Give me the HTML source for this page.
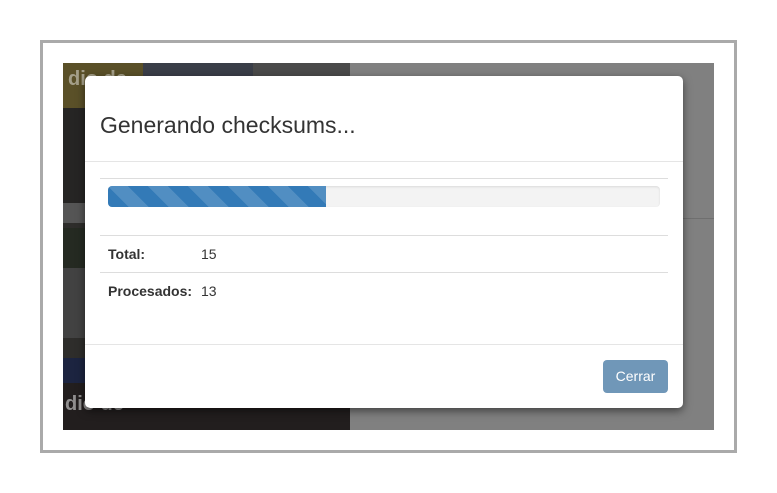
<!DOCTYPE html>
<html><head><meta charset="utf-8"><style>
*{box-sizing:border-box;margin:0;padding:0}
body{width:777px;height:493px;background:#fff;position:relative;overflow:hidden;font-family:"Liberation Sans",sans-serif}
.frame{position:absolute;left:40px;top:40px;width:697px;height:413px;border:3px solid #aaa;background:#fff}
.bgl{position:absolute;left:63px;top:63px;width:287px;height:367px;background:#2e2d2b;overflow:hidden}
.bgr{position:absolute;left:350px;top:63px;width:364px;height:367px;background:#808080}
.bgr:after{content:"";position:absolute;left:0;right:0;top:155px;height:1px;background:#6f6f6f}
.b{position:absolute}
.modal{position:absolute;left:85px;top:76px;width:598px;height:332px;background:#fff;border-radius:5px;box-shadow:0 3px 9px rgba(0,0,0,.5)}
h4{position:absolute;left:15px;top:36px;font-size:23px;font-weight:normal;color:#333}
.hl{position:absolute;left:0;right:0;height:1px;background:#e5e5e5}
.tl{position:absolute;left:15px;right:15px;height:1px;background:#ddd}
.prog{position:absolute;left:23px;top:110px;width:552px;height:21px;background:#f3f3f3;border-radius:4px;box-shadow:inset 0 1px 2px rgba(0,0,0,.1);overflow:hidden}
.bar{width:218px;height:100%;background-color:#337ab7;background-image:linear-gradient(45deg,rgba(255,255,255,.15) 25%,transparent 25%,transparent 50%,rgba(255,255,255,.15) 50%,rgba(255,255,255,.15) 75%,transparent 75%,transparent);background-size:40px 40px}
.lbl{position:absolute;left:23px;font-size:14px;font-weight:bold;color:#333}
.val{position:absolute;left:116px;font-size:14px;color:#333}
.btn{position:absolute;left:518px;top:284px;width:65px;height:33px;background:#7097b8;border-radius:4px;color:#fff;font-size:14px;text-align:center;line-height:33px}
</style></head><body>
<div class="frame"></div>
<div class="bgl">
 <div class="b" style="left:0;top:0;width:80px;height:45px;background:#5a5028"></div>
 <div class="b" style="left:80px;top:0;width:110px;height:50px;background:#3a3e48"></div>
 <div class="b" style="left:190px;top:0;width:97px;height:40px;background:#4a4a4a"></div>
 <div class="b" style="left:0;top:45px;width:287px;height:100px;background:#262524"></div>
 <div class="b" style="left:0;top:140px;width:287px;height:20px;background:#555"></div>
 <div class="b" style="left:0;top:165px;width:287px;height:40px;background:#252a22"></div>
 <div class="b" style="left:0;top:205px;width:287px;height:70px;background:#424242"></div>
 <div class="b" style="left:0;top:295px;width:287px;height:25px;background:#1c2440"></div>
 <div class="b" style="left:0;top:320px;width:287px;height:47px;background:#221e1e"></div>
 <div class="b" style="left:5px;top:5px;color:rgba(255,255,255,.45);font-weight:bold;font-size:20px">dio de</div>
 <div class="b" style="left:2px;top:330px;color:rgba(255,255,255,.5);font-weight:bold;font-size:20px">dio de</div>
</div>
<div class="bgr"></div>
<div class="modal">
 <h4>Generando checksums...</h4>
 <div class="hl" style="top:85px"></div>
 <div class="tl" style="top:102px"></div>
 <div class="prog"><div class="bar"></div></div>
 <div class="tl" style="top:159px"></div>
 <div class="lbl" style="top:170px">Total:</div><div class="val" style="top:170px">15</div>
 <div class="tl" style="top:196px"></div>
 <div class="lbl" style="top:207px">Procesados:</div><div class="val" style="top:207px">13</div>
 <div class="hl" style="top:268px"></div>
 <div class="btn">Cerrar</div>
</div>
</body></html>
